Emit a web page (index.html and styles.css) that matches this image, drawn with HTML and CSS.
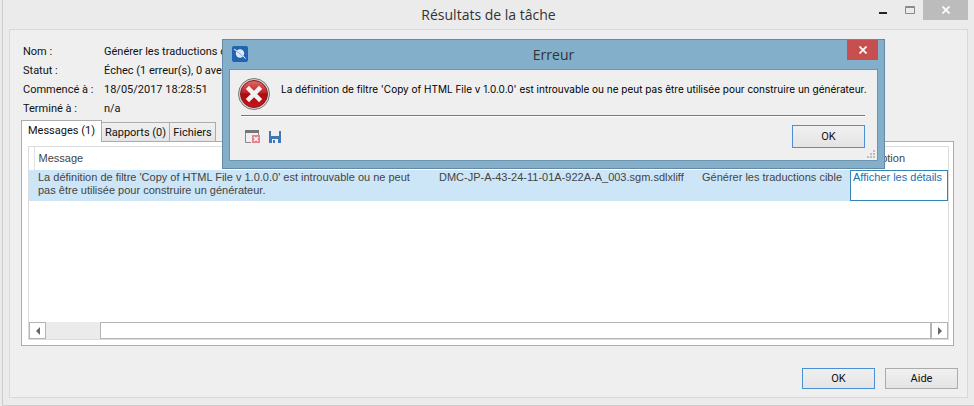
FILE: index.html
```html
<!DOCTYPE html>
<html lang="fr">
<head>
    <meta charset="UTF-8">
    <meta name="viewport" content="width=device-width, initial-scale=1.0">
    <title>Résultats de la tâche</title>
    <link rel="stylesheet" href="styles.css">
</head>
<body>
    <div class="window">
        <header class="titlebar">
            <h1>Résultats de la tâche</h1>
            <div class="window-buttons">
                <button type="button" class="minimize" aria-label="Réduire">
                    <svg width="10" height="10" viewBox="0 0 10 10"><path d="M1 7h8v2H1z" fill="#222"/></svg>
                </button>
                <button type="button" class="maximize" aria-label="Agrandir">
                    <svg width="10" height="8" viewBox="0 0 10 8"><path d="M.5.5h9v7h-9z M0 1.5h10" fill="none" stroke="#8a8a8a"/></svg>
                </button>
                <button type="button" class="close" aria-label="Fermer">
                    <svg width="8" height="8" viewBox="0 0 8 8"><path d="M.5.5l7 7M7.500.5l-7 7" stroke="#fff" stroke-width="1.7"/></svg>
                </button>
            </div>
        </header>

        <main class="client">
            <dl class="summary">
                <dt>Nom :</dt>
                <dd>Générer les traductions cible</dd>
                <dt>Statut :</dt>
                <dd>Échec (1 erreur(s), 0 avertissement(s))</dd>
                <dt>Commencé à :</dt>
                <dd>18/05/2017 18:28:51</dd>
                <dt>Terminé à :</dt>
                <dd>n/a</dd>
            </dl>

            <div class="tabs" role="tablist">
                <button type="button" class="tab active" role="tab" aria-selected="true">Messages (1)</button>
                <button type="button" class="tab" role="tab" aria-selected="false">Rapports (0)</button>
                <button type="button" class="tab" role="tab" aria-selected="false">Fichiers</button>
            </div>

            <div class="tab-page">
                <div class="grid">
                    <table>
                        <colgroup>
                            <col class="col-mark">
                            <col class="col-message">
                            <col class="col-file">
                            <col class="col-task">
                            <col class="col-description">
                        </colgroup>
                        <thead>
                            <tr>
                                <th></th>
                                <th>Message</th>
                                <th></th>
                                <th></th>
                                <th>Description</th>
                            </tr>
                        </thead>
                        <tbody>
                            <tr>
                                <td></td>
                                <td>La définition de filtre 'Copy of HTML File v 1.0.0.0' est introuvable ou ne peut<br>pas être utilisée pour construire un générateur.</td>
                                <td>DMC-JP-A-43-24-11-01A-922A-A_003.sgm.sdlxliff</td>
                                <td>Générer les traductions cible</td>
                                <td class="details"><a href="#">Afficher les détails</a></td>
                            </tr>
                        </tbody>
                    </table>

                    <div class="scrollbar">
                        <button type="button" aria-label="Gauche">
                            <svg width="4" height="8" viewBox="0 0 4 8"><path d="M4 0v8L0 4z" fill="#666"/></svg>
                        </button>
                        <div class="track"><div class="thumb"></div></div>
                        <button type="button" aria-label="Droite">
                            <svg width="4" height="8" viewBox="0 0 4 8"><path d="M0 0v8l4-4z" fill="#666"/></svg>
                        </button>
                    </div>
                </div>
            </div>

            <footer class="actions">
                <button type="button" class="btn default">OK</button>
                <button type="button" class="btn">Aide</button>
            </footer>
        </main>
    </div>

    <!-- Error dialog over the window -->
    <section class="dialog" role="alertdialog" aria-labelledby="dialog-title">
        <header class="dialog-title">
            <svg class="app-icon" width="16" height="16" viewBox="0 0 16 16">
                <rect width="16" height="16" rx="2" fill="#2563b0"/>
                <circle cx="8" cy="7.500" r="4.200" fill="#dcebf8"/>
                <path d="M2 3.500C5 5 10 9 13.500 12.500" fill="none" stroke="#5b8cc8" stroke-width="1.200"/>
                <path d="M2 3C5.500 5 10.500 9 13.500 12.500" fill="none" stroke="#fff" stroke-width=".8"/>
            </svg>
            <h2 id="dialog-title">Erreur</h2>
            <button type="button" class="dialog-close" aria-label="Fermer">
                <svg width="8" height="8" viewBox="0 0 8 8"><path d="M.5.5l7 7M7.500.5l-7 7" stroke="#fff" stroke-width="1.7"/></svg>
            </button>
        </header>
        <div class="dialog-body">
            <div class="dialog-message">
                <svg width="32" height="32" viewBox="0 0 32 32">
                    <defs>
                        <linearGradient id="red" x1="0" y1="0" x2="0" y2="1">
                            <stop offset="0" stop-color="#df6a6a"/>
                            <stop offset=".45" stop-color="#c02225"/>
                            <stop offset=".5" stop-color="#a80d12"/>
                            <stop offset="1" stop-color="#c9151b"/>
                        </linearGradient>
                    </defs>
                    <circle cx="16" cy="16" r="15.500" fill="#d9d9d9" stroke="#777"/>
                    <circle cx="16" cy="16" r="13.500" fill="url(#red)" stroke="#8c1a1c"/>
                    <path d="M11 11l10 10M21 11L11 21" stroke="#f2f2f2" stroke-width="4.500" stroke-linecap="square"/>
                </svg>
                <p>La définition de filtre 'Copy of HTML File v 1.0.0.0' est introuvable ou ne peut pas être utilisée pour construire un générateur.</p>
            </div>
            <hr>
            <div class="dialog-actions">
                <button type="button" class="tool" aria-label="Masquer les détails">
                    <svg width="16" height="14" viewBox="0 0 16 14">
                        <path d="M0 0h14v3H0z" fill="#777"/>
                        <path d="M.5 3v9.500H6M13.500 3v2" fill="none" stroke="#888"/>
                        <path d="M7 5h8v8H7z" fill="#e6808c"/>
                        <path d="M9 7l4 4M13 7l-4 4" stroke="#fff" stroke-width="1.500"/>
                    </svg>
                </button>
                <button type="button" class="tool" aria-label="Enregistrer">
                    <svg width="12" height="12" viewBox="0 0 12 12">
                        <path d="M0 0h12v12H0z" fill="#3f78b5"/>
                        <path d="M2 0h8v5H2zM3 8h6v4H3z" fill="#efefef"/>
                        <path d="M4 9h2v3H4z" fill="#3f78b5"/>
                    </svg>
                </button>
                <button type="button" class="btn default">OK</button>
            </div>
            <svg class="grip" width="9" height="9" viewBox="0 0 9 9">
                <path d="M6 0h2v2H6zM3 3h2v2H3zM6 3h2v2H6zM0 6h2v2H0zM3 6h2v2H3zM6 6h2v2H6z" fill="#bdbdbd"/>
            </svg>
        </div>
    </section>
</body>
</html>
```
FILE: styles.css
```css
* {
    box-sizing: border-box;
}
body {
    font-family: Roboto, "Liberation Sans", Arial, sans-serif;
    font-size: 11px;
    line-height: 13px;
    color: #111;
    background-color: #ebebeb;
    margin: 0;
    height: 100vh;
}
button {
    font: inherit;
    color: inherit;
    background: none;
    border: none;
    padding: 0;
}
h1, h2 {
    font-family: "Open Sans", "Noto Sans", sans-serif;
    font-size: 14px;
    font-weight: normal;
    line-height: 20px;
    color: #333;
    margin: 0;
}

/* Main window */
.window {
    display: flex;
    flex-direction: column;
    height: 100%;
    margin-left: 2px;
    padding: 0 6px 7px;
    border-left: 1px solid #cdcdcd;
    border-bottom: 1px solid #cdcdcd;
}
.titlebar {
    display: grid;
    grid-template-columns: 1fr auto 1fr;
    height: 29px;
}
.titlebar h1 {
    grid-column: 2;
    padding-top: 5px;
}
.window-buttons {
    display: flex;
    justify-content: flex-end;
    align-items: flex-start;
}
.window-buttons button {
    display: flex;
    align-items: center;
    justify-content: center;
    width: 27px;
    height: 20px;
}
.window-buttons .close {
    width: 45px;
    background-color: #bcbcbc;
}
.client {
    flex: 1;
    display: flex;
    flex-direction: column;
    background-color: #efefef;
    border: 1px solid #d9d9d9;
    padding: 12px 9px 8px 11px;
}
.summary {
    display: grid;
    grid-template-columns: 81px 1fr;
    grid-auto-rows: 19px;
    line-height: 19px;
    margin: 0 2px;
}
.summary dd {
    margin: 0;
}

/* Tabs */
.tabs {
    display: flex;
    align-items: flex-end;
    height: 21px;
    margin-top: 2px;
}
.tab {
    height: 19px;
    padding: 0 3px;
    border: 1px solid #acacac;
    border-left-width: 0;
    border-bottom: none;
    background: linear-gradient(#f0f0f0, #e5e5e5);
}
.tab.active {
    height: 22px;
    padding: 0 6px 3px;
    border-left-width: 1px;
    background: #fff;
    margin-bottom: -1px;
    z-index: 1;
}
.tab-page {
    flex: 1;
    display: flex;
    background-color: #fff;
    border: 1px solid #acacac;
    padding: 4px 4px 5px 6px;
    margin-right: 4px;
}
.grid {
    flex: 1;
    display: flex;
    flex-direction: column;
    border: 1px solid #dcdcdc;
}
table {
    width: 100%;
    table-layout: fixed;
    border-collapse: collapse;
    font-family: "Liberation Sans", Arial, sans-serif;
    font-size: 11px;
    line-height: 13px;
    color: #444;
}
.col-mark {
    width: 5px;
}
.col-message {
    width: 401px;
}
.col-file {
    width: 263px;
}
.col-description {
    width: 98px;
}
th {
    height: 23px;
    padding: 0 4px;
    font-weight: normal;
    text-align: left;
}
th:first-child {
    border-right: 1px solid #e2e2e2;
}
th:last-child {
    padding: 0;
}
td {
    height: 31px;
    padding: 1px 4px 0;
    vertical-align: top;
    white-space: nowrap;
    background-color: #cde6f7;
}
td:first-child, th:first-child {
    padding: 0;
}
.details {
    padding: 1px 3px 0;
    background-color: #fff;
    outline: 1px solid #3484b8;
    outline-offset: -1px;
}
.details a {
    color: #1671b8;
    text-decoration: none;
}
.scrollbar {
    display: flex;
    height: 17px;
    margin-top: auto;
    background-color: #ebebeb;
}
.scrollbar button {
    display: flex;
    align-items: center;
    justify-content: center;
    width: 17px;
    background-color: #fff;
    border: 1px solid #b4b4b4;
}
.track {
    flex: 1;
    display: flex;
    padding-left: 54px;
}
.thumb {
    flex: 1;
    background-color: #fff;
    border: 1px solid #b4b4b4;
}

/* Buttons */
.actions {
    display: flex;
    justify-content: flex-end;
    gap: 10px;
    margin-top: 22px;
}
.btn {
    width: 73px;
    height: 21px;
    background: linear-gradient(#f0f0f0, #e4e4e4);
    border: 1px solid #acacac;
}
.btn.default {
    border-color: #4a90d4;
}

/* Error dialog */
.dialog {
    position: absolute;
    top: 39px;
    left: 222px;
    right: 89px;
    z-index: 2;
    padding: 0 6px 7px;
    background-color: #84afca;
    border: 1px solid #668aa3;
}
.dialog-title {
    display: grid;
    grid-template-columns: 1fr auto 1fr;
    height: 29px;
}
.app-icon {
    margin: 6px 0 0 3px;
}
.dialog-title h2 {
    padding-top: 5px;
}
.dialog-close {
    display: flex;
    align-items: center;
    justify-content: center;
    justify-self: end;
    width: 31px;
    height: 20px;
    background-color: #c84f50;
}
.dialog-body {
    position: relative;
    background-color: #efefef;
    border: 1px solid #6d95b0;
    padding: 8px 12px 12px 8px;
}
.dialog-message {
    display: flex;
    gap: 11px;
}
.dialog-message svg {
    flex: none;
}
.dialog-message p {
    font-family: Inter, "Liberation Sans", sans-serif;
    font-size: 10px;
    margin: 5px 0 0;
    color: #000;
    white-space: nowrap;
}
hr {
    height: 2px;
    margin: 5px 0 8px 3px;
    border: none;
    border-top: 1px solid #777;
    border-bottom: 1px solid #fff;
}
.dialog-actions {
    display: flex;
    align-items: center;
    gap: 8px;
    padding-left: 7px;
}
.dialog-actions .tool {
    display: flex;
}
.dialog-actions .btn {
    height: 23px;
    margin-left: auto;
}
.grip {
    position: absolute;
    right: 1px;
    bottom: 1px;
}
```
